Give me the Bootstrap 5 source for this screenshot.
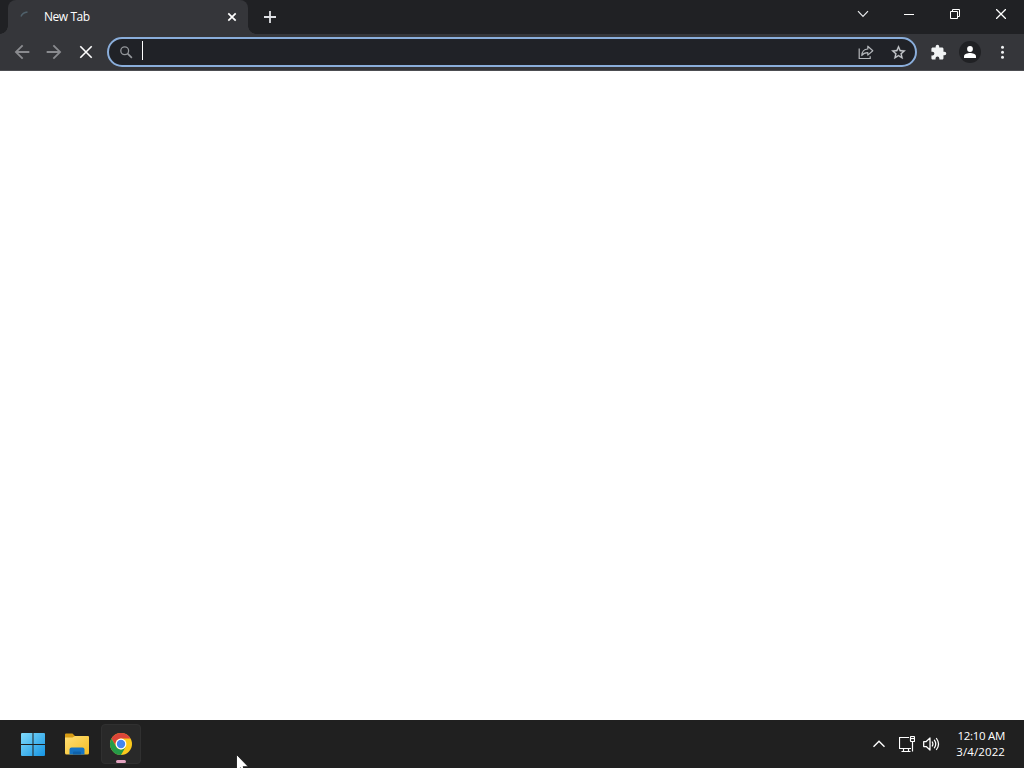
<!DOCTYPE html>
<html lang="en">
  <head>
    <meta charset="UTF-8" />
    <meta name="viewport" content="width=device-width, initial-scale=1.0" />
    <title>New Tab</title>
    <link
      href="https://cdn.jsdelivr.net/npm/bootstrap@5.3.3/dist/css/bootstrap.min.css"
      rel="stylesheet"
    />
    <style>
      body {
        font-family: "Open Sans", "Noto Sans", sans-serif;
        font-size: 12px;
        line-height: 16px;
        color: #fff;
        background: #fff;
      }

      svg {
        display: block;
        flex-shrink: 0;
      }

      .tab-strip {
        height: 34px;
        padding-left: 8px;
        background: #202124;
      }

      .browser-tab {
        position: relative;
        width: 240px;
        height: 34px;
        padding: 0 10px 0 12px;
        border-radius: 8px 8px 0 0;
        background: #35363a;
      }

      /* curved feet of the active tab */
      .browser-tab::before,
      .browser-tab::after {
        content: "";
        position: absolute;
        bottom: 0;
        width: 8px;
        height: 8px;
      }

      .browser-tab::before {
        left: -8px;
        background: radial-gradient(circle at 0 0, transparent 7.5px, #35363a 8px);
      }

      .browser-tab::after {
        right: -8px;
        background: radial-gradient(circle at 100% 0, transparent 7.5px, #35363a 8px);
      }

      .tab-title {
        margin-left: 12px;
        letter-spacing: -0.45px;
      }

      .new-tab-btn {
        width: 28px;
        margin-left: 8px;
      }

      .window-btn {
        width: 46px;
        height: 28px;
      }

      .toolbar {
        height: 37px;
        padding: 0 6px;
        background: #35363a;
        border-bottom: 1px solid #4c4d51;
      }

      .tool-btn {
        width: 32px;
        height: 32px;
      }

      .address-bar {
        height: 30px;
        margin: 0 5px;
        padding: 0 1px 0 10px;
        border: 2px solid #8aaedb;
        border-radius: 15px;
        background: #202227;
      }

      .caret {
        width: 1px;
        height: 19px;
        margin: 0 0 3px 8px;
        background: #fff;
      }

      .profile-pic {
        width: 22px;
        height: 22px;
        background: #202124;
      }

      .taskbar {
        height: 48px;
        padding: 0 19px 0 11px;
        background: #202020;
      }

      .task-btn {
        width: 44px;
        height: 48px;
      }

      .task-active {
        width: 40px;
        height: 40px;
        margin-left: 2px;
        border: 1px solid #303030;
        border-radius: 4px;
        background: #292929;
      }

      .task-active .running {
        position: absolute;
        bottom: 0;
        left: 14px;
        width: 10px;
        height: 3px;
        border-radius: 2px;
        background: #e3a3c0;
      }

      .network-icon {
        margin: 0 8px 0 14px;
      }

      .volume-icon {
        margin-right: 15px;
      }

      .clock {
        width: 50px;
        font-size: 11.5px;
        letter-spacing: -0.3px;
        white-space: nowrap;
      }

      .clock-date {
        letter-spacing: 0.1px;
      }

      .pointer {
        position: absolute;
        left: 236px;
        top: 754px;
      }
    </style>
  </head>
  <body class="vh-100 overflow-hidden position-relative">
    <div class="d-flex flex-column h-100">
      <!-- Tabs and window controls -->
      <header class="tab-strip d-flex align-items-start">
        <div class="browser-tab d-flex align-items-center">
          <svg width="12" height="14" viewBox="0 0 12 14" fill="none">
            <path d="M1 6.5Q2.5 2.7 7.5 2" stroke="#50616b" stroke-width="1.5" />
          </svg>
          <span class="tab-title flex-grow-1">New Tab</span>
          <svg width="12" height="12" viewBox="0 0 12 12">
            <path d="M2.3 2.3l7.4 7.4M9.7 2.3L2.3 9.7" stroke="#fff" stroke-width="1.7" />
          </svg>
        </div>
        <div class="new-tab-btn h-100 d-flex align-items-center justify-content-center">
          <svg width="12" height="12" viewBox="0 0 12 12">
            <path d="M6 0v12M0 6h12" stroke="#dfe1e5" stroke-width="1.8" />
          </svg>
        </div>
        <div class="d-flex ms-auto">
          <div class="window-btn d-flex align-items-center justify-content-center">
            <svg width="12" height="8" viewBox="0 0 12 8" fill="none">
              <path d="M1 1.2l5 5.3 5-5.3" stroke="#e8eaed" stroke-width="1.2" />
            </svg>
          </div>
          <div class="window-btn d-flex align-items-center justify-content-center">
            <svg width="10" height="10" viewBox="0 0 10 10">
              <path d="M0 5.5h10" stroke="#fff" />
            </svg>
          </div>
          <div class="window-btn d-flex align-items-center justify-content-center">
            <svg width="10" height="10" viewBox="0 0 10 10" fill="none" stroke="#fff">
              <path d="M.5 2.5h7v7h-7zM2.5 2.5v-2h7v7h-2" />
            </svg>
          </div>
          <div class="window-btn d-flex align-items-center justify-content-center">
            <svg width="10" height="10" viewBox="0 0 10 10">
              <path d="M0 0l10 10M10 0L0 10" stroke="#fff" stroke-width="1.3" />
            </svg>
          </div>
        </div>
      </header>

      <!-- Toolbar -->
      <div class="toolbar d-flex align-items-center">
        <div class="tool-btn d-flex align-items-center justify-content-center">
          <svg width="22" height="22" viewBox="0 0 24 24" fill="#8a8b8f">
            <path d="M20 11H7.83l5.59-5.59L12 4l-8 8 8 8 1.41-1.41L7.83 13H20z" />
          </svg>
        </div>
        <div class="tool-btn d-flex align-items-center justify-content-center">
          <svg width="22" height="22" viewBox="0 0 24 24" fill="#8a8b8f">
            <path d="M4 11h12.17l-5.59-5.59L12 4l8 8-8 8-1.41-1.41L16.17 13H4z" />
          </svg>
        </div>
        <div class="tool-btn d-flex align-items-center justify-content-center">
          <svg width="14" height="14" viewBox="0 0 14 14">
            <path d="M1.3 1.3l11.4 11.4M12.7 1.3L1.3 12.7" stroke="#fff" stroke-width="1.6" />
          </svg>
        </div>

        <div class="address-bar d-flex align-items-center flex-grow-1">
          <svg width="15" height="15" viewBox="0 0 15 15" fill="none" stroke="#94979b">
            <circle cx="5.7" cy="5.7" r="3.9" stroke-width="1.3" />
            <path d="M8.6 8.6l4.3 4.3" stroke-width="1.6" />
          </svg>
          <div class="caret"></div>
          <div class="tool-btn ms-auto d-flex align-items-center justify-content-center">
            <svg width="16" height="16" viewBox="0 0 16 16" fill="none" stroke="#b4b7bb" stroke-width="1.2">
              <path d="M1.2 4.5v10h11v-2.2" />
              <path d="M3.8 11.5c.2-4 2.3-6.3 6-6.5V2.2l5 4.5-5 4.4V8.6c-2.7 0-4.6.8-6 2.9z" stroke-linejoin="round" />
            </svg>
          </div>
          <div class="tool-btn d-flex align-items-center justify-content-center">
            <svg width="17" height="17" viewBox="0 0 24 24" fill="#c8cbcf">
              <path d="M22 9.24l-7.19-.62L12 2 9.19 8.63 2 9.24l5.46 4.73L5.82 21 12 17.27 18.18 21l-1.63-7.03L22 9.24zM12 15.4l-3.76 2.27 1-4.28-3.32-2.88 4.38-.38L12 6.1l1.71 4.04 4.38.38-3.32 2.88 1 4.28L12 15.4z" stroke="#c8cbcf" stroke-width=".4" />
            </svg>
          </div>
        </div>

        <div class="tool-btn d-flex align-items-center justify-content-center">
          <svg width="17" height="17" viewBox="0 0 24 24" fill="#f1f3f4">
            <path d="M20.5 11H19V7c0-1.1-.9-2-2-2h-4V3.5a2.5 2.5 0 0 0-5 0V5H4c-1.1 0-2 .9-2 2v3.8h1.5a2.7 2.7 0 0 1 0 5.4H2V20c0 1.1.9 2 2 2h3.8v-1.5a2.7 2.7 0 0 1 5.4 0V22H17c1.1 0 2-.9 2-2v-4h1.5a2.5 2.5 0 0 0 0-5z" />
          </svg>
        </div>
        <div class="tool-btn d-flex align-items-center justify-content-center">
          <div class="profile-pic rounded-circle d-flex align-items-center justify-content-center">
            <svg width="12" height="12" viewBox="0 0 12 12" fill="#fff">
              <circle cx="6" cy="3" r="2.9" />
              <path d="M0 12v-1.7C0 8 3.6 7 6 7s6 1 6 3.3V12z" />
            </svg>
          </div>
        </div>
        <div class="tool-btn d-flex align-items-center justify-content-center">
          <svg width="5" height="14" viewBox="0 0 5 14" fill="#f1f3f4">
            <circle cx="2.5" cy="2.3" r="1.5" />
            <circle cx="2.5" cy="7.3" r="1.5" />
            <circle cx="2.5" cy="12.3" r="1.5" />
          </svg>
        </div>
      </div>

      <main class="flex-grow-1 bg-white"></main>

      <!-- Taskbar -->
      <footer class="taskbar d-flex align-items-center">
        <div class="task-btn d-flex align-items-center justify-content-center">
          <svg width="24" height="24" viewBox="0 0 24 24">
            <defs>
              <linearGradient id="winBlue" gradientUnits="userSpaceOnUse" x1="0" y1="0" x2="24" y2="24">
                <stop offset="0" stop-color="#83dcfb" />
                <stop offset="1" stop-color="#1594e3" />
              </linearGradient>
            </defs>
            <path d="M1 1h10.5v11H0V2a1 1 0 0 1 1-1zM12.5 1H23a1 1 0 0 1 1 1v10H12.5zM0 13h11.5v11H1a1 1 0 0 1-1-1zM12.5 13H24v10a1 1 0 0 1-1 1H12.5z" fill="url(#winBlue)" />
          </svg>
        </div>
        <div class="task-btn d-flex align-items-center justify-content-center">
          <svg width="26" height="24" viewBox="0 0 26 24">
            <defs>
              <linearGradient id="folder" x1="0" y1="0" x2="1" y2="1">
                <stop offset="0" stop-color="#ffdf75" />
                <stop offset="1" stop-color="#f5bd24" />
              </linearGradient>
            </defs>
            <path d="M2 1.5h6.5L11 4v3H1V2.5a1 1 0 0 1 1-1z" fill="#d69b13" />
            <path d="M1 5.5h7.5L11 4h13a1 1 0 0 1 1 1v16a1.5 1.5 0 0 1-1.5 1.5h-21A1.5 1.5 0 0 1 1 21z" fill="url(#folder)" />
            <path d="M5.5 22.5v-5a2 2 0 0 1 2-2h11a2 2 0 0 1 2 2v5z" fill="#1674c4" />
            <path d="M9 22.5v-2a1 1 0 0 1 1-1h6a1 1 0 0 1 1 1v2z" fill="#0f62ab" />
          </svg>
        </div>
        <div class="task-active position-relative d-flex align-items-center justify-content-center">
          <svg width="24" height="24" viewBox="0 0 24 24">
            <circle cx="12" cy="12" r="11" fill="#fbc91c" />
            <path d="M2.47 6.5A11 11 0 0 1 21.53 6.5H12a5.5 5.5 0 0 0-4.76 8.25z" fill="#dc4539" />
            <path d="M2.47 6.5A11 11 0 0 0 12 23l4.76-8.25a5.5 5.5 0 0 1-9.52 0z" fill="#259b48" />
            <circle cx="12" cy="12" r="5.4" fill="#fff" />
            <circle cx="12" cy="12" r="4.2" fill="#4485ee" />
          </svg>
          <span class="running"></span>
        </div>

        <div class="ms-auto d-flex align-items-center">
          <svg width="12" height="8" viewBox="0 0 12 8" fill="none">
            <path d="M.5 6.8L6 1.3l5.5 5.5" stroke="#fff" stroke-width="1.4" />
          </svg>
          <svg class="network-icon" width="16" height="18" viewBox="0 0 16 18" fill="none" stroke="#fff" stroke-width="1.2">
            <path d="M10 2.5H.5v11h11.5M13.5 6.5v10M4.5 13.5v3M9.5 13.5v3M2.5 16.5h9" />
            <rect x="11.5" y="1.5" width="4" height="5" rx=".5" />
            <path d="M11.5 3.5h4" />
          </svg>
          <svg class="volume-icon" width="17" height="16" viewBox="1 0 17 16" fill="none" stroke="#fff" stroke-width="1.25" stroke-linecap="round" stroke-linejoin="round">
            <path d="M1.700 5.500h2.500L8 2v12l-3.800-3.500H1.700z" />
            <path d="M10.300 6q1.200 2 0 4M12.400 4.200q2.700 3.800 0 7.600M14.500 2.500q4.100 5.500 0 11" />
          </svg>
          <div class="clock text-end">
            <div>12:10 AM</div>
            <div class="clock-date">3/4/2022</div>
          </div>
        </div>
      </footer>
    </div>

    <svg class="pointer" width="13" height="14" viewBox="0 0 13 14">
      <path d="M.5.5v17l4-3.700 2.700 5.500 2.500-1.200-2.600-5.400h5.200z" fill="#fff" stroke="#111" stroke-width=".8" />
    </svg>

    <script src="https://cdn.jsdelivr.net/npm/bootstrap@5.3.3/dist/js/bootstrap.bundle.min.js"></script>
  </body>
</html>
